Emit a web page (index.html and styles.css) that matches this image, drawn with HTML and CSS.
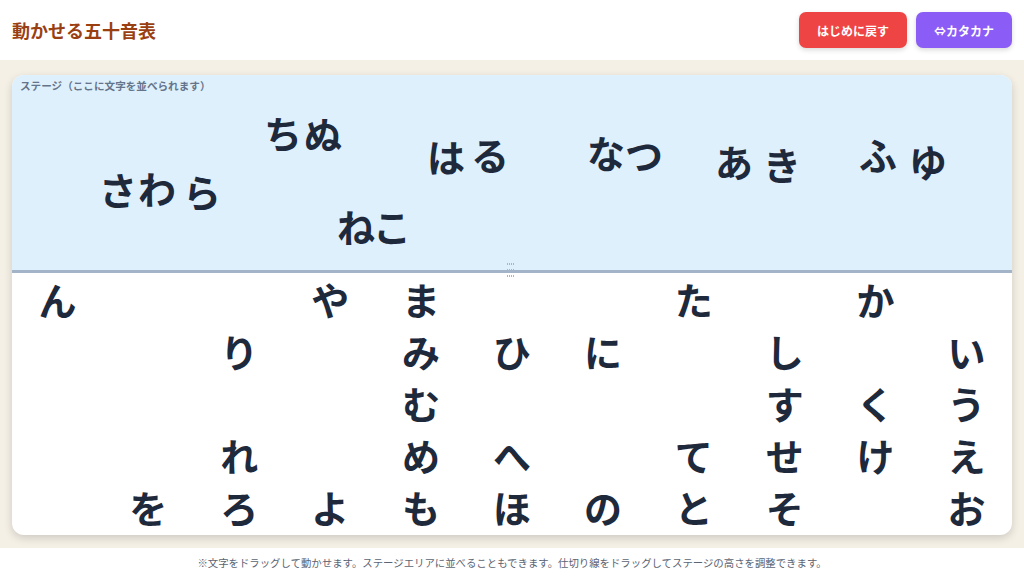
FILE: index.html
```html
<!DOCTYPE html>
<html lang="ja">
<head>
<meta charset="utf-8">
<title>動かせる五十音表</title>
<link rel="stylesheet" href="styles.css">
</head>
<body>
<header class="topbar">
  <h1 class="title">動かせる五十音表</h1>
  <div class="actions">
    <button class="btn btn-reset">はじめに戻す</button>
    <button class="btn btn-kata">⇔カタカナ</button>
  </div>
</header>
<main class="main">
  <section class="board">
    <div class="stage">
      <span class="stage-label">ステージ（ここに文字を並べられます）</span>
      <span class="tile" style="left:84px;top:90px">さ</span>
      <span class="tile" style="left:123px;top:89px">わ</span>
      <span class="tile" style="left:168px;top:92px">ら</span>
      <span class="tile" style="left:249px;top:33px">ち</span>
      <span class="tile" style="left:289px;top:34px">ぬ</span>
      <span class="tile" style="left:322px;top:127px">ね</span>
      <span class="tile" style="left:358px;top:127px">こ</span>
      <span class="tile" style="left:412px;top:57px">は</span>
      <span class="tile" style="left:456px;top:55px">る</span>
      <span class="tile" style="left:572px;top:53px">な</span>
      <span class="tile" style="left:610px;top:55px">つ</span>
      <span class="tile" style="left:700px;top:62px">あ</span>
      <span class="tile" style="left:748px;top:65px">き</span>
      <span class="tile" style="left:844px;top:55px">ふ</span>
      <span class="tile" style="left:894px;top:62px">ゆ</span>
    </div>
    <div class="divider"><span class="grip"></span></div>
    <div class="chart">
      <span class="cell">ん</span><span class="cell"></span><span class="cell"></span><span class="cell">や</span><span class="cell">ま</span><span class="cell"></span><span class="cell"></span><span class="cell">た</span><span class="cell"></span><span class="cell">か</span><span class="cell"></span>
      <span class="cell"></span><span class="cell"></span><span class="cell">り</span><span class="cell"></span><span class="cell">み</span><span class="cell">ひ</span><span class="cell">に</span><span class="cell"></span><span class="cell">し</span><span class="cell"></span><span class="cell">い</span>
      <span class="cell"></span><span class="cell"></span><span class="cell"></span><span class="cell"></span><span class="cell">む</span><span class="cell"></span><span class="cell"></span><span class="cell"></span><span class="cell">す</span><span class="cell">く</span><span class="cell">う</span>
      <span class="cell"></span><span class="cell"></span><span class="cell">れ</span><span class="cell"></span><span class="cell">め</span><span class="cell">へ</span><span class="cell"></span><span class="cell">て</span><span class="cell">せ</span><span class="cell">け</span><span class="cell">え</span>
      <span class="cell"></span><span class="cell">を</span><span class="cell">ろ</span><span class="cell">よ</span><span class="cell">も</span><span class="cell">ほ</span><span class="cell">の</span><span class="cell">と</span><span class="cell">そ</span><span class="cell"></span><span class="cell">お</span>
    </div>
  </section>
</main>
<footer class="footer">※文字をドラッグして動かせます。ステージエリアに並べることもできます。仕切り線をドラッグしてステージの高さを調整できます。</footer>
</body>
</html>
```

FILE: styles.css
```css
* { box-sizing: border-box; }
html, body { margin: 0; padding: 0; }
body {
  width: 1024px;
  height: 576px;
  overflow: hidden;
  display: flex;
  flex-direction: column;
  background: #f5f0e6;
  font-family: "Noto Sans CJK JP", "Noto Sans", sans-serif;
  color: #1e293b;
}
.topbar {
  height: 60px;
  flex: none;
  background: #ffffff;
  display: flex;
  align-items: center;
  justify-content: space-between;
  padding: 0 12px;
}
.title {
  margin: 0;
  font-size: 18px;
  font-weight: 700;
  color: #9a3f12;
  letter-spacing: 0;
}
.actions { display: flex; gap: 9px; }
.btn {
  height: 36px;
  border: none;
  border-radius: 7px;
  color: #ffffff;
  font-family: "Noto Sans CJK JP", sans-serif;
  font-size: 12px;
  font-weight: 700;
  padding: 0 18px;
  box-shadow: 0 2px 5px rgba(0,0,0,0.15);
}
.btn-reset { background: #ef4444; width: 108px; }
.btn-kata { background: #8b5cf6; width: 96px; }
.main {
  flex: 1;
  padding: 15px 12px 13px;
  display: flex;
}
.board {
  flex: 1;
  display: flex;
  flex-direction: column;
  background: #ffffff;
  border-radius: 12px;
  overflow: hidden;
  box-shadow: 0 3px 8px rgba(0,0,0,0.16);
}
.stage {
  position: relative;
  height: 195px;
  flex: none;
  background: #dff0fd;
}
.stage-label {
  position: absolute;
  left: 8px;
  top: 3px;
  font-size: 10.6px;
  font-weight: 700;
  color: #64748b;
}
.tile {
  position: absolute;
  width: 44px;
  height: 48px;
  line-height: 48px;
  text-align: center;
  font-size: 38px;
  font-weight: 700;
  color: #1e293b;
}
.divider {
  position: relative;
  height: 3px;
  flex: none;
  background: #a3b4c8;
}
.grip {
  position: absolute;
  left: 495px;
  top: -7px;
  width: 7px;
  height: 15px;
  background:
    repeating-linear-gradient(90deg, #aab4c2 0 1px, transparent 1px 2px) 0 0 / 7px 2px no-repeat,
    repeating-linear-gradient(90deg, #aab4c2 0 1px, transparent 1px 2px) 0 6px / 7px 2px no-repeat,
    repeating-linear-gradient(90deg, #aab4c2 0 1px, transparent 1px 2px) 0 12px / 7px 2px no-repeat;
}
.chart {
  flex: 1;
  display: grid;
  grid-template-columns: repeat(11, 1fr);
  grid-template-rows: repeat(5, 1fr);
  padding: 0 0 2px;
}
.cell {
  display: flex;
  align-items: center;
  justify-content: center;
  font-size: 38px;
  font-weight: 700;
  color: #1e293b;
  line-height: 1;
}
.footer {
  height: 28px;
  flex: none;
  background: #ffffff;
  display: flex;
  align-items: center;
  justify-content: center;
  font-size: 10.4px;
  color: #5b6473;
}
```
